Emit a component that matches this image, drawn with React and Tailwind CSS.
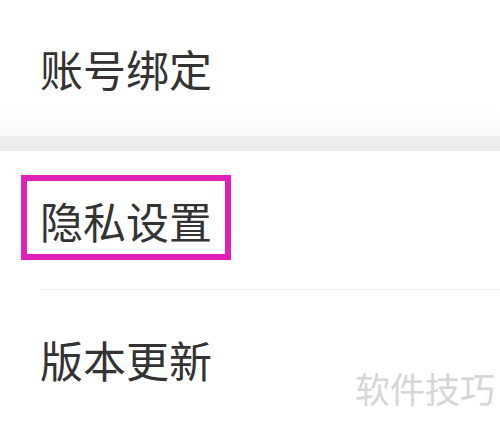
import React from "react";

export default function App() {
  const font = { fontFamily: '"Noto Sans CJK SC", "Noto Sans", sans-serif' };
  return (
    <div className="relative w-[500px] h-[428px] bg-white overflow-hidden" style={font}>
      <div className="h-[136px] flex items-center pl-[40px] text-[43px] text-[#333333] leading-none bg-gradient-to-b from-white from-80% to-[#f8f8f8]">
        账号绑定
      </div>
      <div className="h-[15px] bg-[#ededed]" />
      <div className="h-[138px] flex items-center pl-[40px]">
        <div className="relative text-[43px] text-[#333333] leading-none">
          隐私设置
          <div className="absolute left-[-19px] right-[-19px] top-[-24px] bottom-[-18px] border-[6px] border-[#e020b8]" />
        </div>
      </div>
      <div className="ml-[40px] h-px bg-[#ebebeb]" />
      <div className="h-[138px] flex items-center pl-[40px] text-[43px] text-[#333333] leading-none">
        版本更新
      </div>
      <div className="absolute right-[5px] top-[370px] text-[35px] leading-none text-[#d6d6d6]">
        软件技巧
      </div>
    </div>
  );
}
